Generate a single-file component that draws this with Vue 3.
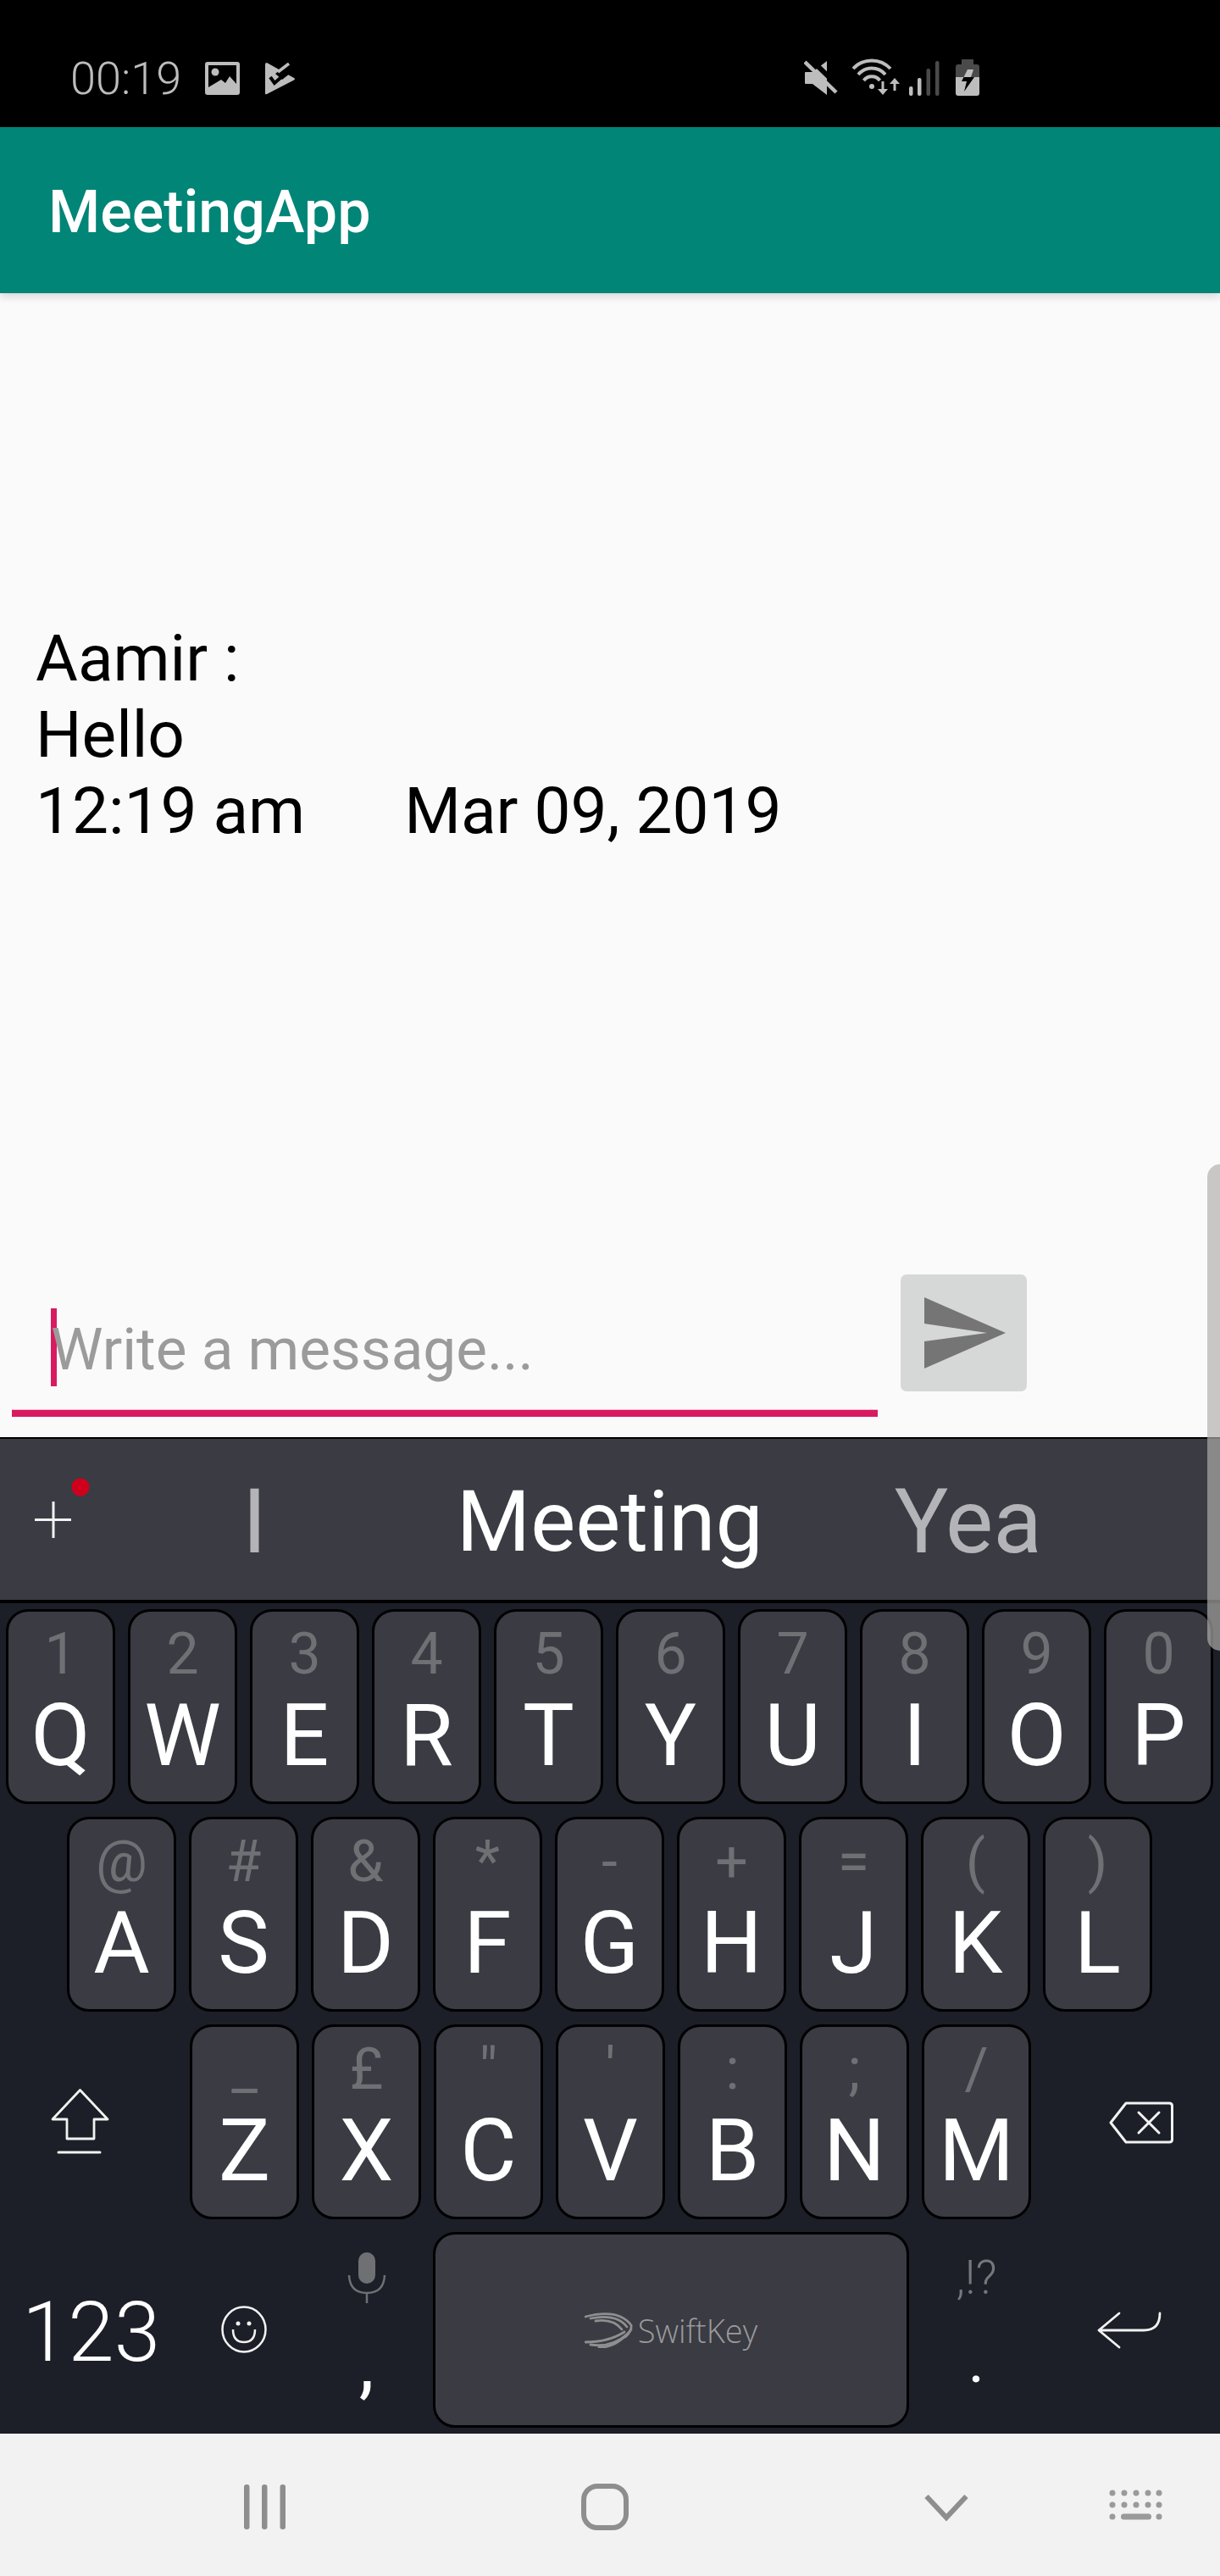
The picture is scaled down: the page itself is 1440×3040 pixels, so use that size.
<script setup>
const rows = [
  [['Q', '1'], ['W', '2'], ['E', '3'], ['R', '4'], ['T', '5'], ['Y', '6'], ['U', '7'], ['I', '8'], ['O', '9'], ['P', '0']],
  [['A', '@'], ['S', '#'], ['D', '&'], ['F', '*'], ['G', '-'], ['H', '+'], ['J', '='], ['K', '('], ['L', ')']],
  [['Z', '_'], ['X', '£'], ['C', '"'], ['V', "'"], ['B', ':'], ['N', ';'], ['M', '/']]
]
const kbDots = [
  [6, 6], [20, 6], [34, 6], [48, 6], [61, 6],
  [6, 20], [20, 20], [34, 20], [48, 20], [61, 20],
  [6, 34], [61, 34]
]
</script>

<template>
  <div class="phone">
    <!-- status bar -->
    <div class="status">
      <span class="clock">00:19</span>
      <svg class="ic-gallery" width="41" height="39" viewBox="0 0 41 39">
        <rect width="41" height="39" rx="3" fill="#bdbdbd" />
        <rect x="4" y="4" width="33" height="31" fill="#000" />
        <circle cx="12" cy="12" r="4.5" fill="#bdbdbd" />
        <path d="M4 30 L19 21 L24 25 L29 17 L37 26 V36 H4 Z" fill="#bdbdbd" />
      </svg>
      <svg class="ic-play" width="36" height="38" viewBox="0 0 36 38">
        <path d="M2 0 L34 18 Q36 19 34 20.5 L2 37 Q0 38 0 36 V2 Q0 0 2 0 Z" fill="#bdbdbd" />
        <path d="M12 13 L30 -1 L38 6 L20 20 Z" fill="#000" />
        <path d="M15 11 L28 1" stroke="#bdbdbd" stroke-width="3.5" fill="none" />
        <path d="M6 17 L11 24 L26 11" stroke="#000" stroke-width="4" fill="none" />
      </svg>
      <svg class="ic-mute" width="40" height="45" viewBox="0 0 40 45">
        <path d="M2 15 H10 L27 2 V42 L10 29 H2 Q1 29 1 28 V16 Q1 15 2 15 Z" fill="#bdbdbd" />
        <path d="M7 -1 L44 35" stroke="#000" stroke-width="6" fill="none" />
        <path d="M1 3 L38 39" stroke="#bdbdbd" stroke-width="4.5" fill="none" />
      </svg>
      <svg class="ic-wifi" width="58" height="46" viewBox="0 0 58 46">
        <circle cx="24" cy="34" r="3" fill="#bdbdbd" />
        <g fill="none" stroke="#bdbdbd" stroke-width="4">
          <path d="M2 13 A30 30 0 0 1 46 13" />
          <path d="M8 20 A21 21 0 0 1 40 20" />
          <path d="M14.5 27 A12 12 0 0 1 33.5 27" />
        </g>
        <path d="M35.5 28 h3 v9 h4.5 l-6 7 l-6 -7 h4.5 Z" fill="#bdbdbd" />
        <path d="M49.5 39 h3 v-8 h4.5 l-6 -7 l-6 7 h4.5 Z" fill="#bdbdbd" />
      </svg>
      <svg class="ic-signal" width="36" height="41" viewBox="0 0 36 41">
        <rect x="0" y="30" width="4.5" height="11" rx="2" fill="#bdbdbd" />
        <rect x="10" y="20" width="4.5" height="21" rx="2" fill="#bdbdbd" />
        <rect x="20.5" y="9" width="4.5" height="32" rx="2" fill="#4a4a4a" />
        <rect x="31" y="0" width="4.5" height="41" rx="2" fill="#4a4a4a" />
      </svg>
      <svg class="ic-battery" width="28" height="43" viewBox="0 0 28 43">
        <defs>
          <clipPath id="bat-top"><rect width="28" height="21" /></clipPath>
          <clipPath id="bat-low"><rect y="21" width="28" height="22" /></clipPath>
        </defs>
        <path d="M7 0 H21 V6 H25 Q28 6 28 9 V21 H0 V9 Q0 6 3 6 H7 Z" fill="#4a4a4a" />
        <path d="M0 21 H28 V40 Q28 43 25 43 H3 Q0 43 0 40 Z" fill="#bdbdbd" />
        <path d="M14 12 H21 L18 21 H22 L10 38 L13 26 H7 Z" fill="#bdbdbd" clip-path="url(#bat-top)" />
        <path d="M14 12 H21 L18 21 H22 L10 38 L13 26 H7 Z" fill="#000" clip-path="url(#bat-low)" />
      </svg>
    </div>

    <!-- app bar -->
    <div class="appbar">MeetingApp</div>

    <!-- messages -->
    <div class="chat">
      <div class="msg">Aamir :</div>
      <div class="msg">Hello</div>
      <div class="msg msg-meta">
        <span>12:19 am</span>
        <span>Mar 09, 2019</span>
      </div>
    </div>

    <!-- input -->
    <div class="composer">
      <div class="field">
        <span class="caret"></span>
        <span class="placeholder">Write a message...</span>
      </div>
      <div class="send">
        <svg width="96" height="84" viewBox="0 0 96 84">
          <path d="M0 0 L96 42 L0 84 V52 L74 42 L0 31 Z" fill="#757575" />
        </svg>
      </div>
    </div>

    <!-- keyboard -->
    <div class="suggestions">
      <svg class="plus" width="65" height="72" viewBox="0 0 65 72">
        <path d="M22 28 V71 M0 49.5 H43" stroke="#f2f2f2" stroke-width="3" fill="none" />
        <circle cx="54" cy="11" r="10.5" fill="#d0001c" />
      </svg>
      <span class="sug sug-i">I</span>
      <span class="sug sug-main">Meeting</span>
      <span class="sug sug-yea">Yea</span>
    </div>

    <div class="keyboard">
      <div class="row row-1">
        <div v-for="k in rows[0]" :key="k[0]" class="key">
          <span class="hint">{{ k[1] }}</span>
          <span class="letter">{{ k[0] }}</span>
        </div>
      </div>

      <div class="row row-2">
        <div v-for="k in rows[1]" :key="k[0]" class="key">
          <span class="hint">{{ k[1] }}</span>
          <span class="letter">{{ k[0] }}</span>
        </div>
      </div>

      <div class="row row-3">
        <svg class="shift" width="70" height="78" viewBox="0 0 70 78">
          <path d="M34.5 1.5 L67 36 H51 V59 H19 V36 H2 Z" fill="none" stroke="#f2f2f2" stroke-width="2.8" stroke-linejoin="round" />
          <path d="M9 75 H58" stroke="#f2f2f2" stroke-width="3" stroke-linecap="round" />
        </svg>
        <div v-for="k in rows[2]" :key="k[0]" class="key">
          <span class="hint">{{ k[1] }}</span>
          <span class="letter">{{ k[0] }}</span>
        </div>
        <svg class="backspace" width="76" height="50" viewBox="0 0 76 50">
          <path d="M20 2 H71 Q74.5 2 74.5 5 V45 Q74.5 48 71 48 H20 L2 25 Z" fill="none" stroke="#f2f2f2" stroke-width="3" stroke-linejoin="round" />
          <path d="M35 13 L59 37 M59 13 L35 37" stroke="#f2f2f2" stroke-width="3" stroke-linecap="round" />
        </svg>
      </div>

      <div class="row row-4">
        <span class="num">123</span>
        <svg class="emoji" width="54" height="56" viewBox="0 0 54 56">
          <ellipse cx="27" cy="28" rx="25.5" ry="26.5" fill="none" stroke="#f2f2f2" stroke-width="2.5" />
          <circle cx="20" cy="21" r="2.5" fill="#f2f2f2" />
          <circle cx="33" cy="21" r="2.5" fill="#f2f2f2" />
          <path d="M14 28 Q14 43 27 43 Q40 43 40 28" fill="none" stroke="#f2f2f2" stroke-width="2.5" />
        </svg>
        <div class="side side-comma">
          <svg width="46" height="60" viewBox="0 0 46 60">
            <rect x="13" y="0" width="20" height="37" rx="10" fill="#6f7074" />
            <path d="M2 27 Q3 48 23 48 Q43 48 44 27 M23 48 V60" fill="none" stroke="#6f7074" stroke-width="2.5" />
          </svg>
          <span class="punct">,</span>
        </div>
        <div class="key space">
          <svg width="58" height="42" viewBox="0 0 58 42">
            <g fill="none" stroke="#8f8f90" stroke-width="2.8" stroke-linecap="round">
              <path d="M1 5 Q40 -5 55 15 Q56 22 48 29" />
              <path d="M7 7 Q38 1 50 17" />
              <path d="M13 10 Q34 7 44 20" />
              <path d="M1 35 Q28 35 47 23" />
              <path d="M7 38 Q32 42 51 25" />
              <path d="M17 41 Q38 42 55 20" />
            </g>
          </svg>
          <span class="brand">SwiftKey</span>
        </div>
        <div class="side side-period">
          <span class="alt">,!?</span>
          <span class="punct punct-dot">.</span>
        </div>
        <svg class="enter" width="76" height="44" viewBox="0 0 76 44">
          <path d="M26 2 L2 22 L26 42 M2 22 H55 Q74 22 74 2" fill="none" stroke="#f2f2f2" stroke-width="2.8" stroke-linecap="round" stroke-linejoin="round" />
        </svg>
      </div>
    </div>

    <!-- nav bar -->
    <div class="nav">
      <svg class="nav-recents" width="49" height="53" viewBox="0 0 49 53">
        <rect x="0" width="6.5" height="53" rx="3" fill="#8e8e8e" />
        <rect x="21" width="6.5" height="53" rx="3" fill="#8e8e8e" />
        <rect x="42.5" width="6.5" height="53" rx="3" fill="#8e8e8e" />
      </svg>
      <svg class="nav-home" width="56" height="55" viewBox="0 0 56 55">
        <rect x="3" y="3" width="50" height="49" rx="16" fill="none" stroke="#8e8e8e" stroke-width="6" />
      </svg>
      <svg class="nav-back" width="52" height="32" viewBox="0 0 52 32">
        <path d="M2.5 2 L26 27 L49.5 2" fill="none" stroke="#8e8e8e" stroke-width="6" />
      </svg>
      <svg class="nav-kb" width="64" height="40" viewBox="0 0 64 40">
        <circle v-for="(d, i) in kbDots" :key="i" :cx="d[0] - 2" :cy="d[1] - 2" r="3.5" fill="#9a9a9a" />
        <rect x="14" y="28.5" width="36" height="7" rx="3.5" fill="#9a9a9a" />
      </svg>
    </div>

    <!-- overlay scrollbar -->
    <div class="scrollbar"></div>
  </div>
</template>

<style>
body {
  margin: 0;
  background: #fafafa;
}
</style>

<style scoped>
.phone {
  position: relative;
  width: 1440px;
  height: 3040px;
  display: flex;
  flex-direction: column;
  overflow: hidden;
  background: #fafafa;
  font-family: Roboto, "Liberation Sans", sans-serif;
}

.status {
  height: 150px;
  flex: none;
  background: #000;
  display: flex;
  align-items: flex-start;
}
.status svg {
  display: block;
  flex: none;
}
.clock {
  margin: 62px 0 0 83px;
  width: 132px;
  font-size: 54px;
  line-height: 62px;
  font-weight: 300;
  color: #bdbdbd;
}
.ic-gallery { margin: 73px 0 0 27px; }
.ic-play { margin: 74px 0 0 30px; }
.ic-mute { margin: 70px 0 0 600px; }
.ic-wifi { margin: 68px 0 0 16px; }
.ic-signal { margin: 72px 0 0 10px; }
.ic-battery { margin: 70px 0 0 19px; }

.appbar {
  position: relative;
  z-index: 1;
  flex: none;
  height: 196px;
  box-sizing: border-box;
  padding: 5px 0 0 57px;
  background: #008577;
  color: #fff;
  font-size: 70px;
  font-weight: 500;
  line-height: 191px;
  box-shadow: 0 4px 10px rgba(0, 0, 0, 0.14);
}

.chat {
  flex: 1;
  padding: 386px 0 0 42px;
  color: #000;
  font-size: 76.5px;
  line-height: 90px;
}
.msg-meta {
  display: flex;
  gap: 117px;
}

.composer {
  flex: none;
  height: 196px;
  display: flex;
  align-items: flex-start;
}
.field {
  position: relative;
  box-sizing: border-box;
  width: 1022px;
  height: 172px;
  margin-left: 14px;
  padding: 51px 0 0 46px;
  border-bottom: 8px solid #d81b60;
}
.field::after {
  content: "";
  position: absolute;
  left: 0;
  right: 0;
  bottom: 0;
  height: 1px;
  background: #f8bbd0;
}
.caret {
  position: absolute;
  left: 46px;
  top: 44px;
  width: 7px;
  height: 92px;
  background: #d81b60;
}
.placeholder {
  position: relative;
  font-size: 69.3px;
  line-height: 84px;
  color: #9b9b9b;
}
.send {
  width: 149px;
  height: 138px;
  margin: 4px 0 0 27px;
  background: #d6d8d7;
  border-radius: 7px;
  display: flex;
  align-items: center;
  justify-content: center;
}
.send svg {
  display: block;
  margin-left: 3px;
}

.suggestions {
  flex: none;
  height: 196px;
  box-sizing: border-box;
  border-top: 2px solid #000;
  border-bottom: 4px solid #000;
  background: #3a3b43;
  display: flex;
  align-items: flex-start;
  color: #fff;
}
.plus {
  display: block;
  flex: none;
  margin: 46px 0 0 41px;
}
.sug {
  font-size: 106px;
  line-height: 190px;
  padding-top: 3px;
}
.sug-i {
  margin-left: 180px;
  color: #b3b3b8;
}
.sug-main {
  margin-left: 224px;
  font-size: 100px;
}
.sug-yea {
  margin-left: 155px;
  color: #b3b3b8;
}

.keyboard {
  flex: none;
  height: 980px;
  box-sizing: border-box;
  padding-top: 7px;
  background: #1c1f28;
  display: flex;
  flex-direction: column;
  gap: 15px;
}
.row {
  display: flex;
  height: 230px;
  gap: 15px;
}
.row-1 { padding-left: 7px; }
.row-2 { padding-left: 79px; }
.row-3 { padding-left: 60px; }
.row-4 { gap: 0; height: 231px; }

.key {
  flex: none;
  width: 129px;
  height: 230px;
  box-sizing: border-box;
  border: 3px solid #000;
  border-radius: 26px;
  background: #3a3b43;
  display: flex;
  flex-direction: column;
  align-items: center;
  padding-top: 12px;
}
.hint {
  height: 76px;
  font-size: 68px;
  line-height: 76px;
  color: #6f7074;
}
.letter {
  height: 116px;
  font-size: 102px;
  line-height: 116px;
  color: #fff;
}

.shift {
  display: block;
  flex: none;
  width: 70px;
  margin: 76px 0 0 0;
  margin-right: 79px;
}
.backspace {
  display: block;
  flex: none;
  margin: 91px 0 0 77px;
}

.num {
  flex: none;
  width: 208px;
  margin: 64px 0 0 26px;
  font-size: 98px;
  line-height: 110px;
  font-weight: 300;
  color: #fff;
}
.emoji {
  display: block;
  flex: none;
  margin: 87px 0 0 27px;
}
.side {
  flex: none;
  width: 129px;
  display: flex;
  flex-direction: column;
  align-items: center;
}
.side-comma {
  margin-left: 53px;
  padding-top: 24px;
}
.side-comma svg {
  display: block;
}
.punct {
  margin-top: 22px;
  font-size: 90px;
  line-height: 100px;
  color: #fff;
}
.punct-dot {
  margin-top: 17px;
  font-size: 75px;
}
.space {
  width: 562px;
  height: 231px;
  padding-top: 0;
  margin-left: 14px;
  flex-direction: row;
  justify-content: center;
  gap: 5px;
}
.brand {
  font-family: "Open Sans", Roboto, sans-serif;
  font-size: 38px;
  font-weight: 300;
  color: #9a9a9b;
}
.side-period {
  margin-left: 15px;
  padding-top: 24px;
}
.alt {
  height: 60px;
  font-size: 55px;
  line-height: 60px;
  font-weight: 300;
  color: #76777b;
}
.enter {
  display: block;
  flex: none;
  margin: 94px 0 0 78px;
}

.nav {
  flex: none;
  height: 168px;
  box-sizing: border-box;
  padding-top: 4px;
  background: #f2f2f2;
  display: flex;
  align-items: center;
}
.nav svg {
  display: block;
  flex: none;
}
.nav-recents { margin-left: 288px; }
.nav-home { margin-left: 349px; }
.nav-back { margin: 4px 0 0 349px; }
.nav-kb { margin-left: 166px; }

.scrollbar {
  position: absolute;
  top: 1374px;
  right: 0;
  width: 15px;
  height: 574px;
  border-radius: 15px 0 0 15px;
  background: rgba(176, 174, 171, 0.68);
  z-index: 2;
}
</style>
